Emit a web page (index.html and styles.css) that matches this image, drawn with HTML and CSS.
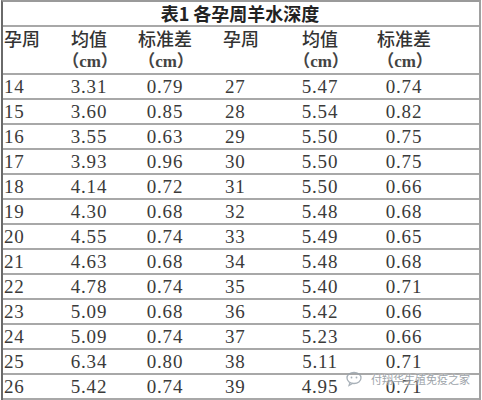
FILE: index.html
```html
<!DOCTYPE html>
<html lang="zh">
<head>
<meta charset="utf-8">
<link rel="stylesheet" href="styles.css">
</head>
<body>
<div class="table">
  <div class="title">表1 各孕周羊水深度</div>
  <div class="row head">
    <div class="c c1">孕周</div>
    <div class="c cc">均值<span class="unit">（cm）</span></div>
    <div class="c cc">标准差<span class="unit">（cm）</span></div>
    <div class="c c4">孕周</div>
    <div class="c cc">均值<span class="unit">（cm）</span></div>
    <div class="c cc">标准差<span class="unit">（cm）</span></div>
    <div class="c"></div>
  </div>
  <div class="row"><div class="c c1">14</div><div class="c cc">3.31</div><div class="c cc">0.79</div><div class="c c4">27</div><div class="c cc">5.47</div><div class="c cc">0.74</div><div class="c"></div></div>
  <div class="row"><div class="c c1">15</div><div class="c cc">3.60</div><div class="c cc">0.85</div><div class="c c4">28</div><div class="c cc">5.54</div><div class="c cc">0.82</div><div class="c"></div></div>
  <div class="row"><div class="c c1">16</div><div class="c cc">3.55</div><div class="c cc">0.63</div><div class="c c4">29</div><div class="c cc">5.50</div><div class="c cc">0.75</div><div class="c"></div></div>
  <div class="row"><div class="c c1">17</div><div class="c cc">3.93</div><div class="c cc">0.96</div><div class="c c4">30</div><div class="c cc">5.50</div><div class="c cc">0.75</div><div class="c"></div></div>
  <div class="row"><div class="c c1">18</div><div class="c cc">4.14</div><div class="c cc">0.72</div><div class="c c4">31</div><div class="c cc">5.50</div><div class="c cc">0.66</div><div class="c"></div></div>
  <div class="row"><div class="c c1">19</div><div class="c cc">4.30</div><div class="c cc">0.68</div><div class="c c4">32</div><div class="c cc">5.48</div><div class="c cc">0.68</div><div class="c"></div></div>
  <div class="row"><div class="c c1">20</div><div class="c cc">4.55</div><div class="c cc">0.74</div><div class="c c4">33</div><div class="c cc">5.49</div><div class="c cc">0.65</div><div class="c"></div></div>
  <div class="row"><div class="c c1">21</div><div class="c cc">4.63</div><div class="c cc">0.68</div><div class="c c4">34</div><div class="c cc">5.48</div><div class="c cc">0.68</div><div class="c"></div></div>
  <div class="row"><div class="c c1">22</div><div class="c cc">4.78</div><div class="c cc">0.74</div><div class="c c4">35</div><div class="c cc">5.40</div><div class="c cc">0.71</div><div class="c"></div></div>
  <div class="row"><div class="c c1">23</div><div class="c cc">5.09</div><div class="c cc">0.68</div><div class="c c4">36</div><div class="c cc">5.42</div><div class="c cc">0.66</div><div class="c"></div></div>
  <div class="row"><div class="c c1">24</div><div class="c cc">5.09</div><div class="c cc">0.74</div><div class="c c4">37</div><div class="c cc">5.23</div><div class="c cc">0.66</div><div class="c"></div></div>
  <div class="row"><div class="c c1">25</div><div class="c cc">6.34</div><div class="c cc">0.80</div><div class="c c4">38</div><div class="c cc">5.11</div><div class="c cc">0.71</div><div class="c"></div></div>
  <div class="row"><div class="c c1">26</div><div class="c cc">5.42</div><div class="c cc">0.74</div><div class="c c4">39</div><div class="c cc">4.95</div><div class="c cc">0.71</div><div class="c"></div></div>
  <div class="watermark">
    <svg class="wm-icon" width="20" height="16" viewBox="0 0 20 16">
      <ellipse cx="8" cy="7" rx="7" ry="5.5" fill="none" stroke="#9aa4ad" stroke-width="1.3"/>
      <path d="M4 11.5 L3 14.5 L7 12.3" fill="none" stroke="#9aa4ad" stroke-width="1.2"/>
      <circle cx="5.5" cy="6.5" r="0.9" fill="#9aa4ad"/>
      <circle cx="10.5" cy="6.5" r="0.9" fill="#9aa4ad"/>
    </svg>
    <span class="wm-text">付翔华生殖免疫之家</span>
  </div>
</div>
</body>
</html>
```

FILE: styles.css
```css
html, body {
  margin: 0;
  padding: 0;
  background: #ffffff;
}
.table {
  position: relative;
  margin-left: 1px;
  width: 476px;
  border-top: 2px solid #9a9a9a;
  border-left: 2px solid #6a6a6a;
  border-right: 2px solid #a0a0a0;
  font-family: "Liberation Serif", "Noto Sans CJK SC", serif;
  color: #3a3a3a;
}
.title {
  height: 23px;
  line-height: 23px;
  text-align: center;
  font-family: "Noto Sans CJK SC", sans-serif;
  font-weight: 700;
  font-size: 18px;
  color: #222;
  border-bottom: 2px solid #a8a8a8;
  padding-right: 2px;
}
.row {
  display: grid;
  grid-template-columns: 49px 74px 78px 76px 80px 88px 1fr;
  height: 23px;
  border-bottom: 2px solid #a8a8a8;
}
.row.head {
  height: 46px;
}
.c {
  font-size: 19px;
  line-height: 23px;
  letter-spacing: 0.8px;
  white-space: nowrap;
}
.c1 {
  padding-left: 1px;
}
.c4 {
  padding-left: 21px;
}
.cc {
  text-align: center;
}
.head .c {
  font-family: "Noto Sans CJK SC", sans-serif;
  font-size: 18px;
  font-weight: 500;
  letter-spacing: 0;
  color: #333;
  display: flex;
  flex-direction: column;
  align-items: center;
}
.head .c1, .head .c4 {
  align-items: flex-start;
}
.head .c4 {
  padding-left: 19px;
}
.unit {
  font-family: "Liberation Serif", "Noto Sans CJK SC", serif;
  font-size: 17px;
  font-weight: 700;
  line-height: 23px;
  color: #444;
  padding-left: 2px;
}
.watermark {
  position: absolute;
  left: 343px;
  top: 369px;
  display: flex;
  align-items: center;
  gap: 5px;
  opacity: 0.85;
}
.wm-text {
  font-family: "Noto Sans CJK SC", sans-serif;
  font-size: 11px;
  color: #8e959c;
  text-shadow: 0 0 2px #fff, 0 0 2px #fff;
  letter-spacing: 0;
}
```
